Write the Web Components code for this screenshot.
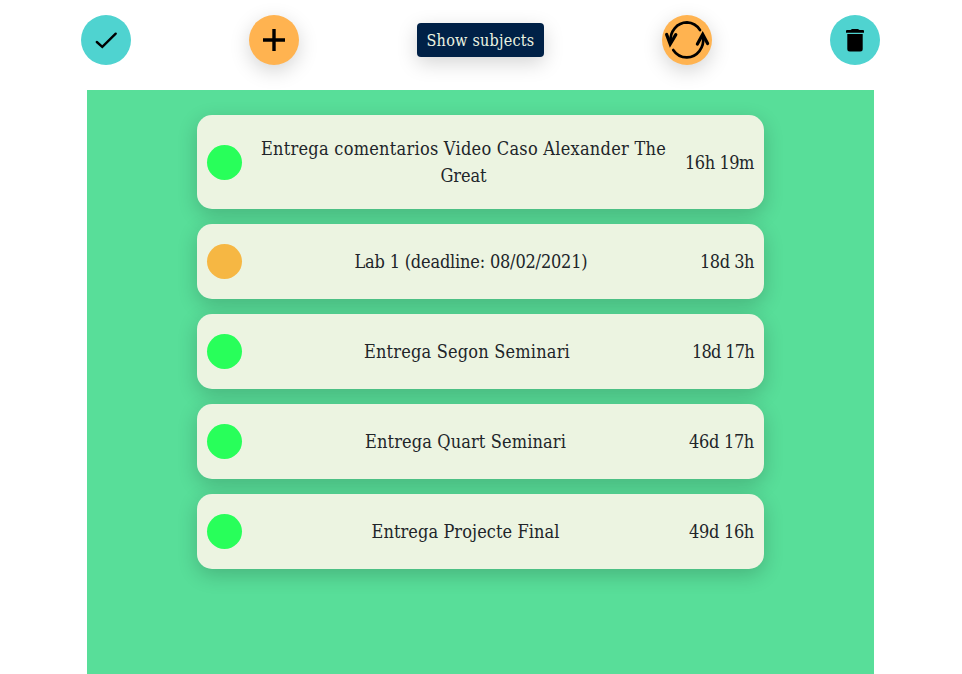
<!DOCTYPE html>
<html lang="en">
<head>
<meta charset="utf-8">
<title>Tasks</title>
<style>
html, body { margin: 0; height: 100%; background: #fff; }
body { font-family: "Roboto Slab", "DejaVu Serif Condensed", "DejaVu Serif", serif; color: #212529; overflow: hidden; }
</style>
</head>
<body>
<task-app></task-app>
<script>
const define = (name, html, setup) => {
  const template = document.createElement('template');
  template.innerHTML = html;
  customElements.define(name, class extends HTMLElement {
    constructor() {
      super();
      this.attachShadow({ mode: 'open' }).append(template.content.cloneNode(true));
    }
    connectedCallback() { if (setup) setup(this); }
  });
};

/* One line of text whose tracking is adjusted to a given measure. */
define('fit-line', `<style>
:host { display: block; white-space: nowrap; }
span { display: inline-block; }
</style><span><slot></slot></span>`, el => {
  const span = el.shadowRoot.querySelector('span');
  const goal = Number(el.getAttribute('measure'));
  const count = el.textContent.length;
  const gap = (goal - span.getBoundingClientRect().width) / count;
  span.style.letterSpacing = gap.toFixed(3) + 'px';
});

define('round-button', `<style>
:host { display: grid; place-items: center; width: 50px; height: 50px; border-radius: 50%; background: #4fd3d0; }
:host([raised]) { background: #ffb350; box-shadow: 0 6px 20px rgba(0,0,0,.17); }
</style><slot></slot>`);

define('text-button', `<style>
:host { display: flex; align-items: center; justify-content: center; box-sizing: border-box; width: 127px; height: 34px; border-radius: 4px;
  background: #002147; color: #ecf4e1; font-size: 16px; box-shadow: 0 6px 20px rgba(0,0,0,.17); }
</style><slot></slot>`);

define('tool-bar', `<style>
:host { display: flex; justify-content: space-between; align-items: center; height: 50px; padding: 15px 82px 25px 81px; }
svg { display: block; width: 50px; height: 50px; fill: none; stroke: #000; }
</style>
<round-button><svg viewBox="0 0 50 50"><path d="M15.8 27 21.3 31.8 34.7 18.7" stroke-width="2.4" stroke-linecap="round"/></svg></round-button>
<round-button raised><svg viewBox="0 0 50 50"><path d="M25 14V36M14 25H36" stroke-width="3.4"/></svg></round-button>
<text-button><fit-line measure="108">Show subjects</fit-line></text-button>
<round-button raised><svg viewBox="0 0 50 50" stroke-width="2.7" stroke-linecap="round" stroke-linejoin="miter"><path d="M38 15A16.6 17.6 0 0 0 25 7.4A16.6 17.6 0 0 0 8.6 27M11.2 35A16.6 17.6 0 0 0 25 42.4A16.6 17.6 0 0 0 41 22"/><path d="M4.6 19.4 8.2 29 13.8 19.6M35.4 29 40.7 19.3 45.6 28.6" stroke-width="3.2"/></svg></round-button>
<round-button><svg viewBox="0 0 50 50"><path d="M17 15H20.5L22 14H28L29.5 15H33Q34 15 34 16V17.7H16V16Q16 15 17 15ZM17.3 19H32.7V34Q32.7 36.5 30.2 36.5H19.8Q17.3 36.5 17.3 34Z" fill="#000" stroke="none"/></svg></round-button>`);

define('task-card', `<style>
:host { display: flex; align-items: center; box-sizing: border-box; min-height: 75px; padding: 20px 10px; border-radius: 15px;
  background: #ecf4e1; box-shadow: 0 6px 20px rgba(0,0,0,.19); font-size: 18px; line-height: 27px; }
i { flex: none; width: 35px; height: 35px; border-radius: 50%; background: var(--status, #28ff5a); }
div { flex: 1; display: flex; flex-direction: column; align-items: center; }
</style><i></i><div><slot></slot></div><slot name="time"></slot>`);

define('task-list', `<style>
:host { display: flex; flex-direction: column; gap: 15px; box-sizing: border-box; width: 787px; height: 584px; margin-left: 87px; padding: 25px 110px; background: #58de99; }
</style><slot></slot>`);

define('task-app', `<style>:host { display: block; }</style>
<tool-bar></tool-bar>
<task-list>
<task-card><fit-line measure="405">Entrega comentarios Video Caso Alexander The</fit-line><fit-line measure="46">Great</fit-line><fit-line slot="time" measure="69">16h 19m</fit-line></task-card>
<task-card style="--status:#f6b743"><fit-line measure="233">Lab 1 (deadline: 08/02/2021)</fit-line><fit-line slot="time" measure="54">18d 3h</fit-line></task-card>
<task-card><fit-line measure="206">Entrega Segon Seminari</fit-line><fit-line slot="time" measure="62">18d 17h</fit-line></task-card>
<task-card><fit-line measure="201">Entrega Quart Seminari</fit-line><fit-line slot="time" measure="65">46d 17h</fit-line></task-card>
<task-card><fit-line measure="188">Entrega Projecte Final</fit-line><fit-line slot="time" measure="65">49d 16h</fit-line></task-card>
</task-list>`);
</script>
</body>
</html>
